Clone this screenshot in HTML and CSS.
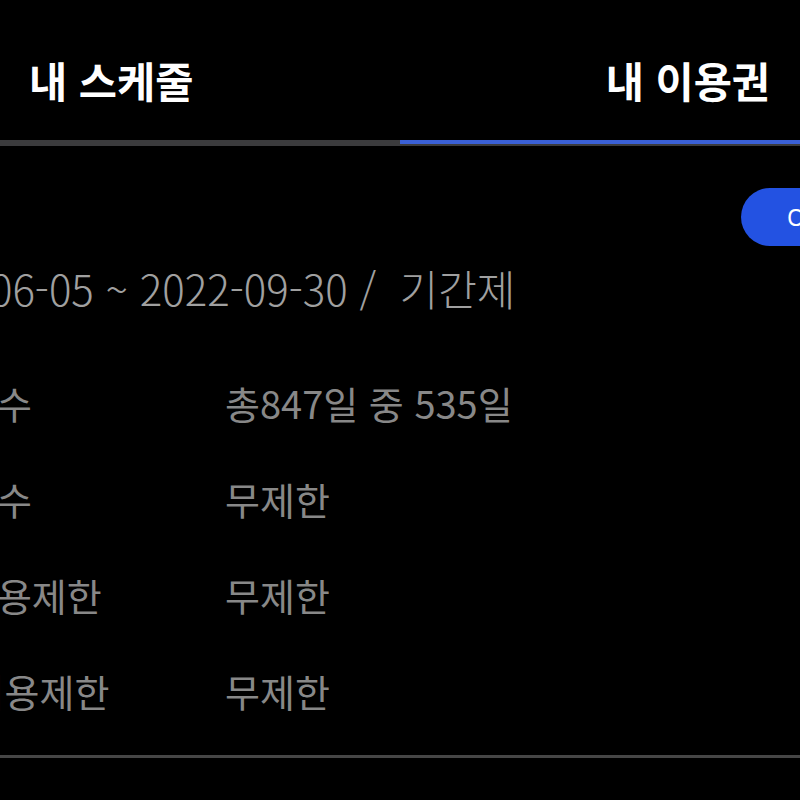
FILE: index.html
```html
<!DOCTYPE html>
<html lang="ko">
<head>
<meta charset="utf-8">
<title>내 이용권</title>
<link rel="stylesheet" href="styles.css">
</head>
<body>
<div class="screen">
  <nav class="tabs">
    <div class="tab tab-left">내 스케줄</div>
    <div class="tab tab-right">내 이용권</div>
  </nav>
  <div class="tab-track">
    <div class="track-half"></div>
    <div class="track-half"><div class="track-active"></div></div>
  </div>
  <section class="panel">
    <div class="status-row">
      <span class="status-pill">ON</span>
    </div>
    <div class="period">2020-06-05 ~ 2022-09-30 /&nbsp; 기간제</div>
    <div class="info">
      <div class="info-row"><span class="info-label">이용일수</span><span class="info-value">총847일 중 535일</span></div>
      <div class="info-row"><span class="info-label">잔여횟수</span><span class="info-value">무제한</span></div>
      <div class="info-row"><span class="info-label">일일이용제한</span><span class="info-value">무제한</span></div>
      <div class="info-row"><span class="info-label">주간 이용제한</span><span class="info-value">무제한</span></div>
    </div>
  </section>
  <div class="divider"></div>
</div>
</body>
</html>
```
FILE: styles.css
```css
html, body {
  margin: 0;
  padding: 0;
  background: #000;
}
body {
  width: 800px;
  height: 800px;
  overflow: hidden;
  font-family: "Noto Sans CJK KR", "Noto Sans", sans-serif;
}
.screen {
  width: 800px;
  overflow: hidden;
}
.tabs {
  display: grid;
  grid-template-columns: 1fr 1fr;
  height: 140px;
}
.tab {
  display: flex;
  align-items: center;
  padding-top: 22px;
  box-sizing: border-box;
  color: #fff;
  font-size: 41.5px;
  font-weight: 700;
  line-height: 1;
}
.tab-left {
  justify-content: flex-start;
  padding-left: 29px;
}
.tab-right {
  justify-content: flex-end;
  padding-right: 30px;
}
.tab-track {
  display: grid;
  grid-template-columns: 1fr 1fr;
  height: 6px;
  background: #3b3b3d;
}
.track-active {
  height: 4px;
  background: #3a60d6;
}
.panel {
  margin: 0 -90px 0 -154px;
  padding: 0 40px;
}
.status-row {
  display: flex;
  justify-content: flex-end;
  margin-top: 42px;
}
.status-pill {
  display: flex;
  align-items: center;
  box-sizing: border-box;
  width: 109px;
  height: 58px;
  padding-left: 46px;
  border-radius: 29px;
  background: #2352e2;
  color: #fff;
  font-family: "Noto Sans", sans-serif;
  font-size: 23px;
}
.period {
  margin-top: 12px;
  height: 60px;
  line-height: 60px;
  color: #a0a0a0;
  font-size: 42px;
  font-weight: 300;
  white-space: nowrap;
}
.info {
  margin-top: 37px;
  padding-left: 6px;
}
.info-row {
  display: grid;
  grid-template-columns: 333px 1fr;
  height: 96px;
  align-items: center;
  color: #888;
  font-size: 38px;
  line-height: 1.2;
  white-space: nowrap;
}
.info-row:last-child .info-label {
  margin-left: -3px;
}
.divider {
  margin-top: 16px;
  height: 3px;
  background: #464646;
}
```
